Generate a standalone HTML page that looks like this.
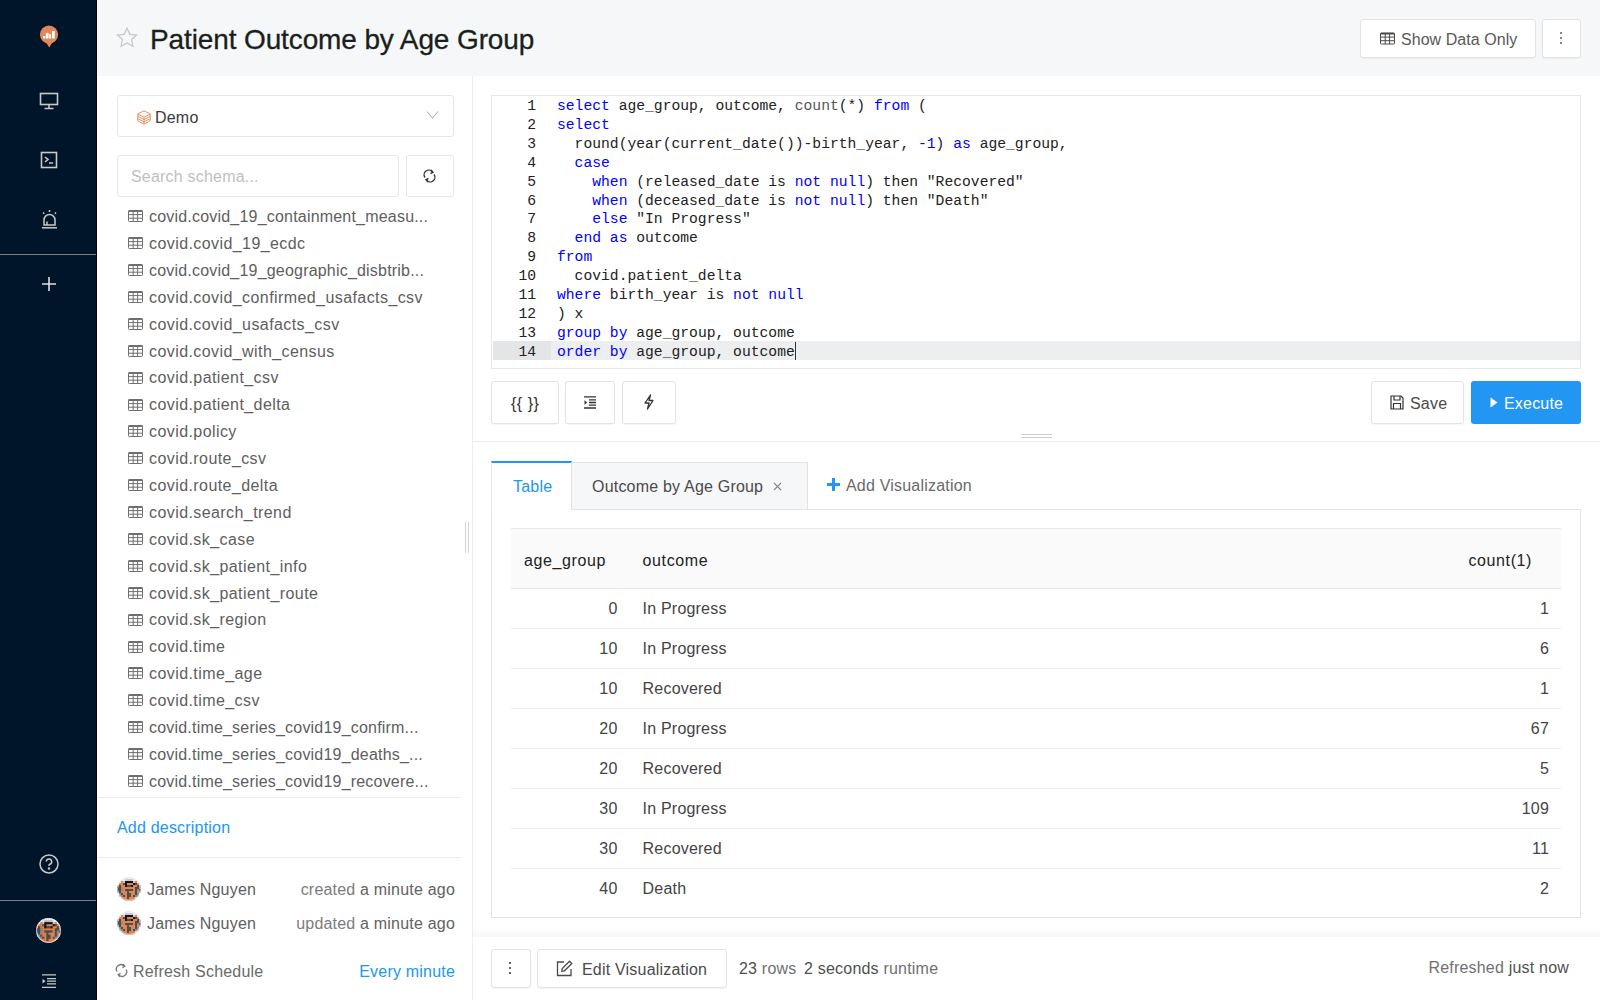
<!DOCTYPE html>
<html><head><meta charset="utf-8">
<style>
*{box-sizing:border-box;margin:0;padding:0}
html,body{width:1600px;height:1000px;overflow:hidden;background:#fff;font-family:"Liberation Sans",sans-serif;font-size:16px;color:#333;letter-spacing:0.2px}
.abs{position:absolute}
#nav{position:absolute;left:0;top:0;width:97px;height:1000px;background:#001529;border-right:1px solid #000}
#nav .sep{position:absolute;left:0;width:96px;height:1px;background:#7d7d7d}
#header{position:absolute;left:97px;top:0;width:1503px;height:76px;background:#f6f7f9}
#title{position:absolute;left:150px;top:22.7px;font-size:28px;color:#1b1f1c;letter-spacing:-0.12px;-webkit-text-stroke:0.3px #1b1f1c;white-space:nowrap;line-height:34px}
.btn{position:absolute;background:#fff;border:1px solid #e3e3e3;border-radius:3px;box-shadow:0 1px 1px rgba(0,0,0,0.04);color:#595959;white-space:nowrap}
#leftpane{position:absolute;left:97px;top:76px;width:376px;height:924px;background:#fff;border-right:1px solid #eceef0}
.sitem{position:absolute;left:149px;font-size:16px;color:#5e5e5e;white-space:nowrap;line-height:20px;letter-spacing:0.42px}
.sitem.tr{letter-spacing:0.2px}
.ticon{position:absolute;left:128px;width:15px;height:12px}
#editor{position:absolute;left:491px;top:95px;width:1090px;height:274px;border:1px solid #e8e8e8;background:#fff}
.ln{letter-spacing:0;position:absolute;left:0;width:45px;text-align:right;font-family:"Liberation Mono",monospace;font-size:14.68px;color:#222;line-height:18.9px}
.code{letter-spacing:0;position:absolute;left:65px;font-family:"Liberation Mono",monospace;font-size:14.68px;color:#222;line-height:18.9px;white-space:pre}
.k{color:#0000ff}
.th{position:absolute;font-size:16px;color:#222;letter-spacing:0.6px;line-height:20px;white-space:nowrap}
.td{position:absolute;font-size:16px;color:#444;line-height:20px;white-space:nowrap}
.avatar{width:24px;height:24px;border-radius:50%;background:radial-gradient(circle at 50% 50%,#7a5a48 0,#b8704a 35%,#d98a55 55%,#6d6d6d 80%,#e8e8e8 100%)}
.rowline{position:absolute;left:511px;width:1050px;height:1px;background:#efefef}
</style></head>
<body>
<!-- NAV -->
<div id="nav">
  <svg class="abs" style="left:38px;top:23px" width="22" height="26" viewBox="0 0 22 26">
    <circle cx="11" cy="11.6" r="9.1" fill="#e2875a"/>
    <path d="M7.5 18.5 L15.5 17.5 L11.2 24.4 Z" fill="#e2875a"/>
    <rect x="5" y="13" width="2.2" height="2.5" fill="#fff"/>
    <rect x="7.8" y="9.9" width="2.8" height="5.6" fill="#fff"/>
    <rect x="11.2" y="11" width="1.9" height="4.5" fill="#fff"/>
    <rect x="14" y="8" width="2.8" height="7.5" fill="#fff"/>
  </svg>
  <!-- monitor -->
  <svg class="abs" style="left:39px;top:92px" width="20" height="18" viewBox="0 0 20 18" fill="none" stroke="#c9c9c9" stroke-width="1.6">
    <rect x="1.5" y="1.5" width="17" height="11"/>
    <path d="M10 12.5 V16 M5.5 16.5 H14.5"/>
  </svg>
  <!-- terminal -->
  <svg class="abs" style="left:40px;top:151px" width="18" height="18" viewBox="0 0 18 18" fill="none" stroke="#c9c9c9" stroke-width="1.6">
    <rect x="1.5" y="1.5" width="15" height="15"/>
    <path d="M5 6 L8 8.5 L5 11 M9 12 H13"/>
  </svg>
  <!-- alert -->
  <svg class="abs" style="left:40px;top:209px" width="19" height="20" viewBox="0 0 19 20" fill="none" stroke="#c9c9c9" stroke-width="1.5">
    <path d="M4 16 V11 A5.5 5.5 0 0 1 15 11 V16 Z"/>
    <path d="M2 18.8 H17"/>
    <path d="M9.5 1 V3 M3 3.5 L4.2 4.8 M16 3.5 L14.8 4.8"/>
    <path d="M7 16 V12.5"/>
  </svg>
  <div class="sep" style="top:254px"></div>
  <!-- plus -->
  <svg class="abs" style="left:41px;top:276px" width="16" height="16" viewBox="0 0 16 16" stroke="#e0e0e0" stroke-width="1.6">
    <path d="M8 1 V15 M1 8 H15"/>
  </svg>
  <!-- help -->
  <svg class="abs" style="left:38px;top:853px" width="22" height="22" viewBox="0 0 22 22" fill="none" stroke="#c9c9c9" stroke-width="1.5">
    <circle cx="11" cy="11" r="9"/>
    <path d="M8.3 8.6 A2.7 2.7 0 1 1 11.8 11.2 C11 11.5 11 12 11 13"/>
    <circle cx="11" cy="15.6" r="0.5" fill="#c9c9c9"/>
  </svg>
  <div class="sep" style="top:900px"></div>
  <!-- avatar -->
  <svg class="abs" style="left:36px;top:918px" width="25" height="25" viewBox="0 0 24 24"><defs><clipPath id="av3"><circle cx="12" cy="12" r="12"/></clipPath></defs><g clip-path="url(#av3)"><rect x="0" y="0" width="2.3" height="2.3" fill="#eef0f2"/><rect x="2" y="0" width="2.3" height="2.3" fill="#eef0f2"/><rect x="4" y="0" width="2.3" height="2.3" fill="#eef0f2"/><rect x="6" y="0" width="2.3" height="2.3" fill="#eef0f2"/><rect x="8" y="0" width="2.3" height="2.3" fill="#eef0f2"/><rect x="10" y="0" width="2.3" height="2.3" fill="#eef0f2"/><rect x="12" y="0" width="2.3" height="2.3" fill="#eef0f2"/><rect x="14" y="0" width="2.3" height="2.3" fill="#eef0f2"/><rect x="16" y="0" width="2.3" height="2.3" fill="#eef0f2"/><rect x="18" y="0" width="2.3" height="2.3" fill="#eef0f2"/><rect x="20" y="0" width="2.3" height="2.3" fill="#eef0f2"/><rect x="22" y="0" width="2.3" height="2.3" fill="#eef0f2"/><rect x="0" y="2" width="2.3" height="2.3" fill="#eef0f2"/><rect x="2" y="2" width="2.3" height="2.3" fill="#eef0f2"/><rect x="4" y="2" width="2.3" height="2.3" fill="#eef0f2"/><rect x="6" y="2" width="2.3" height="2.3" fill="#eef0f2"/><rect x="8" y="2" width="2.3" height="2.3" fill="#c8ccd0"/><rect x="10" y="2" width="2.3" height="2.3" fill="#c8ccd0"/><rect x="12" y="2" width="2.3" height="2.3" fill="#c8ccd0"/><rect x="14" y="2" width="2.3" height="2.3" fill="#c8ccd0"/><rect x="16" y="2" width="2.3" height="2.3" fill="#eef0f2"/><rect x="18" y="2" width="2.3" height="2.3" fill="#eef0f2"/><rect x="20" y="2" width="2.3" height="2.3" fill="#eef0f2"/><rect x="22" y="2" width="2.3" height="2.3" fill="#eef0f2"/><rect x="0" y="4" width="2.3" height="2.3" fill="#eef0f2"/><rect x="2" y="4" width="2.3" height="2.3" fill="#eef0f2"/><rect x="4" y="4" width="2.3" height="2.3" fill="#e3844f"/><rect x="6" y="4" width="2.3" height="2.3" fill="#c8ccd0"/><rect x="8" y="4" width="2.3" height="2.3" fill="#161616"/><rect x="10" y="4" width="2.3" height="2.3" fill="#161616"/><rect x="12" y="4" width="2.3" height="2.3" fill="#161616"/><rect x="14" y="4" width="2.3" height="2.3" fill="#161616"/><rect x="16" y="4" width="2.3" height="2.3" fill="#c8ccd0"/><rect x="18" y="4" width="2.3" height="2.3" fill="#e3844f"/><rect x="20" y="4" width="2.3" height="2.3" fill="#eef0f2"/><rect x="22" y="4" width="2.3" height="2.3" fill="#eef0f2"/><rect x="0" y="6" width="2.3" height="2.3" fill="#eef0f2"/><rect x="2" y="6" width="2.3" height="2.3" fill="#e3844f"/><rect x="4" y="6" width="2.3" height="2.3" fill="#e3844f"/><rect x="6" y="6" width="2.3" height="2.3" fill="#4b4f52"/><rect x="8" y="6" width="2.3" height="2.3" fill="#161616"/><rect x="10" y="6" width="2.3" height="2.3" fill="#e3844f"/><rect x="12" y="6" width="2.3" height="2.3" fill="#e3844f"/><rect x="14" y="6" width="2.3" height="2.3" fill="#e3844f"/><rect x="16" y="6" width="2.3" height="2.3" fill="#161616"/><rect x="18" y="6" width="2.3" height="2.3" fill="#4b4f52"/><rect x="20" y="6" width="2.3" height="2.3" fill="#e3844f"/><rect x="22" y="6" width="2.3" height="2.3" fill="#eef0f2"/><rect x="0" y="8" width="2.3" height="2.3" fill="#e3844f"/><rect x="2" y="8" width="2.3" height="2.3" fill="#4b4f52"/><rect x="4" y="8" width="2.3" height="2.3" fill="#e3844f"/><rect x="6" y="8" width="2.3" height="2.3" fill="#e3844f"/><rect x="8" y="8" width="2.3" height="2.3" fill="#161616"/><rect x="10" y="8" width="2.3" height="2.3" fill="#4b4f52"/><rect x="12" y="8" width="2.3" height="2.3" fill="#4b4f52"/><rect x="14" y="8" width="2.3" height="2.3" fill="#161616"/><rect x="16" y="8" width="2.3" height="2.3" fill="#e3844f"/><rect x="18" y="8" width="2.3" height="2.3" fill="#e3844f"/><rect x="20" y="8" width="2.3" height="2.3" fill="#4b4f52"/><rect x="22" y="8" width="2.3" height="2.3" fill="#e3844f"/><rect x="0" y="10" width="2.3" height="2.3" fill="#4b4f52"/><rect x="2" y="10" width="2.3" height="2.3" fill="#4b4f52"/><rect x="4" y="10" width="2.3" height="2.3" fill="#8b8f92"/><rect x="6" y="10" width="2.3" height="2.3" fill="#e3844f"/><rect x="8" y="10" width="2.3" height="2.3" fill="#e3844f"/><rect x="10" y="10" width="2.3" height="2.3" fill="#e3844f"/><rect x="12" y="10" width="2.3" height="2.3" fill="#e3844f"/><rect x="14" y="10" width="2.3" height="2.3" fill="#e3844f"/><rect x="16" y="10" width="2.3" height="2.3" fill="#e3844f"/><rect x="18" y="10" width="2.3" height="2.3" fill="#4b4f52"/><rect x="20" y="10" width="2.3" height="2.3" fill="#4b4f52"/><rect x="22" y="10" width="2.3" height="2.3" fill="#e3844f"/><rect x="0" y="12" width="2.3" height="2.3" fill="#4b4f52"/><rect x="2" y="12" width="2.3" height="2.3" fill="#4b4f52"/><rect x="4" y="12" width="2.3" height="2.3" fill="#8b8f92"/><rect x="6" y="12" width="2.3" height="2.3" fill="#e3844f"/><rect x="8" y="12" width="2.3" height="2.3" fill="#4b4f52"/><rect x="10" y="12" width="2.3" height="2.3" fill="#4b4f52"/><rect x="12" y="12" width="2.3" height="2.3" fill="#4b4f52"/><rect x="14" y="12" width="2.3" height="2.3" fill="#4b4f52"/><rect x="16" y="12" width="2.3" height="2.3" fill="#e3844f"/><rect x="18" y="12" width="2.3" height="2.3" fill="#4b4f52"/><rect x="20" y="12" width="2.3" height="2.3" fill="#8b8f92"/><rect x="22" y="12" width="2.3" height="2.3" fill="#4b4f52"/><rect x="0" y="14" width="2.3" height="2.3" fill="#8b8f92"/><rect x="2" y="14" width="2.3" height="2.3" fill="#4b4f52"/><rect x="4" y="14" width="2.3" height="2.3" fill="#e3844f"/><rect x="6" y="14" width="2.3" height="2.3" fill="#e3844f"/><rect x="8" y="14" width="2.3" height="2.3" fill="#e3844f"/><rect x="10" y="14" width="2.3" height="2.3" fill="#4b4f52"/><rect x="12" y="14" width="2.3" height="2.3" fill="#e3844f"/><rect x="14" y="14" width="2.3" height="2.3" fill="#e3844f"/><rect x="16" y="14" width="2.3" height="2.3" fill="#e3844f"/><rect x="18" y="14" width="2.3" height="2.3" fill="#4b4f52"/><rect x="20" y="14" width="2.3" height="2.3" fill="#e3844f"/><rect x="22" y="14" width="2.3" height="2.3" fill="#8b8f92"/><rect x="0" y="16" width="2.3" height="2.3" fill="#eef0f2"/><rect x="2" y="16" width="2.3" height="2.3" fill="#8b8f92"/><rect x="4" y="16" width="2.3" height="2.3" fill="#4b4f52"/><rect x="6" y="16" width="2.3" height="2.3" fill="#e3844f"/><rect x="8" y="16" width="2.3" height="2.3" fill="#e3844f"/><rect x="10" y="16" width="2.3" height="2.3" fill="#4b4f52"/><rect x="12" y="16" width="2.3" height="2.3" fill="#4b4f52"/><rect x="14" y="16" width="2.3" height="2.3" fill="#e3844f"/><rect x="16" y="16" width="2.3" height="2.3" fill="#e3844f"/><rect x="18" y="16" width="2.3" height="2.3" fill="#4b4f52"/><rect x="20" y="16" width="2.3" height="2.3" fill="#8b8f92"/><rect x="22" y="16" width="2.3" height="2.3" fill="#eef0f2"/><rect x="0" y="18" width="2.3" height="2.3" fill="#eef0f2"/><rect x="2" y="18" width="2.3" height="2.3" fill="#8b8f92"/><rect x="4" y="18" width="2.3" height="2.3" fill="#8b8f92"/><rect x="6" y="18" width="2.3" height="2.3" fill="#4b4f52"/><rect x="8" y="18" width="2.3" height="2.3" fill="#e3844f"/><rect x="10" y="18" width="2.3" height="2.3" fill="#4b4f52"/><rect x="12" y="18" width="2.3" height="2.3" fill="#4b4f52"/><rect x="14" y="18" width="2.3" height="2.3" fill="#e3844f"/><rect x="16" y="18" width="2.3" height="2.3" fill="#4b4f52"/><rect x="18" y="18" width="2.3" height="2.3" fill="#8b8f92"/><rect x="20" y="18" width="2.3" height="2.3" fill="#8b8f92"/><rect x="22" y="18" width="2.3" height="2.3" fill="#eef0f2"/><rect x="0" y="20" width="2.3" height="2.3" fill="#eef0f2"/><rect x="2" y="20" width="2.3" height="2.3" fill="#eef0f2"/><rect x="4" y="20" width="2.3" height="2.3" fill="#e3844f"/><rect x="6" y="20" width="2.3" height="2.3" fill="#e3844f"/><rect x="8" y="20" width="2.3" height="2.3" fill="#e3844f"/><rect x="10" y="20" width="2.3" height="2.3" fill="#4b4f52"/><rect x="12" y="20" width="2.3" height="2.3" fill="#e3844f"/><rect x="14" y="20" width="2.3" height="2.3" fill="#e3844f"/><rect x="16" y="20" width="2.3" height="2.3" fill="#e3844f"/><rect x="18" y="20" width="2.3" height="2.3" fill="#c8ccd0"/><rect x="20" y="20" width="2.3" height="2.3" fill="#eef0f2"/><rect x="22" y="20" width="2.3" height="2.3" fill="#eef0f2"/><rect x="0" y="22" width="2.3" height="2.3" fill="#eef0f2"/><rect x="2" y="22" width="2.3" height="2.3" fill="#eef0f2"/><rect x="4" y="22" width="2.3" height="2.3" fill="#eef0f2"/><rect x="6" y="22" width="2.3" height="2.3" fill="#e3844f"/><rect x="8" y="22" width="2.3" height="2.3" fill="#e3844f"/><rect x="10" y="22" width="2.3" height="2.3" fill="#e3844f"/><rect x="12" y="22" width="2.3" height="2.3" fill="#e3844f"/><rect x="14" y="22" width="2.3" height="2.3" fill="#e3844f"/><rect x="16" y="22" width="2.3" height="2.3" fill="#e3844f"/><rect x="18" y="22" width="2.3" height="2.3" fill="#eef0f2"/><rect x="20" y="22" width="2.3" height="2.3" fill="#eef0f2"/><rect x="22" y="22" width="2.3" height="2.3" fill="#eef0f2"/></g><circle cx="12" cy="12" r="11.5" fill="none" stroke="#e6e6e6" stroke-opacity="0.7" stroke-width="1"/></svg>
  <!-- menu -->
  <svg class="abs" style="left:42px;top:973.5px" width="14" height="14" viewBox="0 0 14 14" fill="none" stroke="#c9c9c9" stroke-width="1.3">
    <path d="M0 0.8 H14 M5 4.6 H14 M5 7.2 H14 M5 9.8 H14 M0 13.3 H14"/>
    <path d="M0.5 4.8 L3.5 7.2 L0.5 9.6 Z" fill="#c9c9c9" stroke="none"/>
  </svg>
</div>

<!-- HEADER -->
<div id="header"></div>
<svg class="abs" style="left:116px;top:27px" width="22" height="21" viewBox="0 0 22 21" fill="none" stroke="#c8c8c8" stroke-width="1.3">
  <path d="M11 1.2 L13.9 7.3 L20.5 8 L15.6 12.5 L16.9 19.2 L11 15.9 L5.1 19.2 L6.4 12.5 L1.5 8 L8.1 7.3 Z"/>
</svg>
<div id="title">Patient Outcome by Age Group</div>
<div class="btn" style="left:1360px;top:19px;width:176px;height:39px"></div>
<svg class="abs" style="left:1380px;top:32px" width="15" height="13" viewBox="0 0 15 12" fill="none" stroke="#4a4a4a" stroke-width="1"><rect x="0.5" y="0.5" width="14" height="11" rx="0.8"/><path d="M0.5 1.2H14.5" stroke-width="1.6"/><path d="M0.5 4.6H14.5M0.5 8.2H14.5M5.2 0.5V11.5M9.6 0.5V11.5"/></svg>
<div class="abs" style="left:1401px;top:30px;font-size:16px;color:#595959;white-space:nowrap;line-height:20px;letter-spacing:0.05px">Show Data Only</div>
<div class="btn" style="left:1542px;top:19px;width:39px;height:39px"></div>
<svg class="abs" style="left:1559px;top:31px" width="4" height="14" viewBox="0 0 4 14" fill="#555"><circle cx="2" cy="2" r="0.95"/><circle cx="2" cy="7" r="0.95"/><circle cx="2" cy="12" r="0.95"/></svg>

<!-- LEFT PANE -->
<div id="leftpane"></div>
<!-- Demo select -->
<div class="btn" style="left:117px;top:95px;width:337px;height:42px;border-color:#e6e6e6;box-shadow:none"></div>
<svg class="abs" style="left:136.5px;top:109.5px" width="14" height="15" viewBox="0 0 14 15" fill="none" stroke="#e0804e" stroke-width="1" stroke-opacity="0.85">
  <path d="M7 0.8 L13.2 4 L13.2 10.8 L7 14.2 L0.8 10.8 L0.8 4 Z"/>
  <path d="M0.8 4 L7 7.3 L13.2 4 M7 7.3 V14.2"/>
  <path d="M0.8 6.3 L7 9.6 L13.2 6.3 M0.8 8.6 L7 11.9 L13.2 8.6"/>
</svg>
<div class="abs" style="left:155px;top:108.0px;font-size:16px;color:#3a3a3a;line-height:20px">Demo</div>
<svg class="abs" style="left:426px;top:110px" width="13" height="10" viewBox="0 0 13 10" fill="none" stroke="#b5b5b5" stroke-width="1.1"><path d="M1 1.5 L6.5 8 L12 1.5"/></svg>
<!-- search -->
<div class="btn" style="left:117px;top:155px;width:282px;height:42px;border-color:#e6e6e6;box-shadow:none"></div>
<div class="abs" style="left:131px;top:167.0px;font-size:16px;color:#bfbfbf;line-height:20px">Search schema...</div>
<div class="btn" style="left:406px;top:155px;width:48px;height:42px;border-color:#e6e6e6;box-shadow:none"></div>
<svg class="abs" style="left:422px;top:168px" width="15" height="16" viewBox="0 0 15 16" fill="none" stroke="#333" stroke-width="1.4">
  <path d="M3 9.5 A4.6 4.6 0 0 1 10.5 4"/>
  <path d="M12 6.5 A4.6 4.6 0 0 1 4.5 12"/>
  <path d="M9 2 L11 4.2 L8.5 5.6" />
  <path d="M6 14 L4 11.8 L6.5 10.4"/>
</svg>
<svg class="ticon" style="top:210.30px" viewBox="0 0 15 12" fill="none" stroke="#6f6f6f" stroke-width="1"><rect x="0.5" y="0.5" width="14" height="11" rx="0.8"/><path d="M0.5 1.2H14.5" stroke-width="1.6"/><path d="M0.5 4.6H14.5M0.5 8.2H14.5M5.2 0.5V11.5M9.6 0.5V11.5"/></svg>
<div class="sitem tr" style="top:207.06px">covid.covid_19_containment_measu...</div>
<svg class="ticon" style="top:237.19px" viewBox="0 0 15 12" fill="none" stroke="#6f6f6f" stroke-width="1"><rect x="0.5" y="0.5" width="14" height="11" rx="0.8"/><path d="M0.5 1.2H14.5" stroke-width="1.6"/><path d="M0.5 4.6H14.5M0.5 8.2H14.5M5.2 0.5V11.5M9.6 0.5V11.5"/></svg>
<div class="sitem" style="top:233.95px">covid.covid_19_ecdc</div>
<svg class="ticon" style="top:264.08px" viewBox="0 0 15 12" fill="none" stroke="#6f6f6f" stroke-width="1"><rect x="0.5" y="0.5" width="14" height="11" rx="0.8"/><path d="M0.5 1.2H14.5" stroke-width="1.6"/><path d="M0.5 4.6H14.5M0.5 8.2H14.5M5.2 0.5V11.5M9.6 0.5V11.5"/></svg>
<div class="sitem tr" style="top:260.84px">covid.covid_19_geographic_disbtrib...</div>
<svg class="ticon" style="top:290.97px" viewBox="0 0 15 12" fill="none" stroke="#6f6f6f" stroke-width="1"><rect x="0.5" y="0.5" width="14" height="11" rx="0.8"/><path d="M0.5 1.2H14.5" stroke-width="1.6"/><path d="M0.5 4.6H14.5M0.5 8.2H14.5M5.2 0.5V11.5M9.6 0.5V11.5"/></svg>
<div class="sitem" style="top:287.73px">covid.covid_confirmed_usafacts_csv</div>
<svg class="ticon" style="top:317.86px" viewBox="0 0 15 12" fill="none" stroke="#6f6f6f" stroke-width="1"><rect x="0.5" y="0.5" width="14" height="11" rx="0.8"/><path d="M0.5 1.2H14.5" stroke-width="1.6"/><path d="M0.5 4.6H14.5M0.5 8.2H14.5M5.2 0.5V11.5M9.6 0.5V11.5"/></svg>
<div class="sitem" style="top:314.62px">covid.covid_usafacts_csv</div>
<svg class="ticon" style="top:344.75px" viewBox="0 0 15 12" fill="none" stroke="#6f6f6f" stroke-width="1"><rect x="0.5" y="0.5" width="14" height="11" rx="0.8"/><path d="M0.5 1.2H14.5" stroke-width="1.6"/><path d="M0.5 4.6H14.5M0.5 8.2H14.5M5.2 0.5V11.5M9.6 0.5V11.5"/></svg>
<div class="sitem" style="top:341.51px">covid.covid_with_census</div>
<svg class="ticon" style="top:371.64px" viewBox="0 0 15 12" fill="none" stroke="#6f6f6f" stroke-width="1"><rect x="0.5" y="0.5" width="14" height="11" rx="0.8"/><path d="M0.5 1.2H14.5" stroke-width="1.6"/><path d="M0.5 4.6H14.5M0.5 8.2H14.5M5.2 0.5V11.5M9.6 0.5V11.5"/></svg>
<div class="sitem" style="top:368.40px">covid.patient_csv</div>
<svg class="ticon" style="top:398.53px" viewBox="0 0 15 12" fill="none" stroke="#6f6f6f" stroke-width="1"><rect x="0.5" y="0.5" width="14" height="11" rx="0.8"/><path d="M0.5 1.2H14.5" stroke-width="1.6"/><path d="M0.5 4.6H14.5M0.5 8.2H14.5M5.2 0.5V11.5M9.6 0.5V11.5"/></svg>
<div class="sitem" style="top:395.29px">covid.patient_delta</div>
<svg class="ticon" style="top:425.42px" viewBox="0 0 15 12" fill="none" stroke="#6f6f6f" stroke-width="1"><rect x="0.5" y="0.5" width="14" height="11" rx="0.8"/><path d="M0.5 1.2H14.5" stroke-width="1.6"/><path d="M0.5 4.6H14.5M0.5 8.2H14.5M5.2 0.5V11.5M9.6 0.5V11.5"/></svg>
<div class="sitem" style="top:422.18px">covid.policy</div>
<svg class="ticon" style="top:452.31px" viewBox="0 0 15 12" fill="none" stroke="#6f6f6f" stroke-width="1"><rect x="0.5" y="0.5" width="14" height="11" rx="0.8"/><path d="M0.5 1.2H14.5" stroke-width="1.6"/><path d="M0.5 4.6H14.5M0.5 8.2H14.5M5.2 0.5V11.5M9.6 0.5V11.5"/></svg>
<div class="sitem" style="top:449.07px">covid.route_csv</div>
<svg class="ticon" style="top:479.20px" viewBox="0 0 15 12" fill="none" stroke="#6f6f6f" stroke-width="1"><rect x="0.5" y="0.5" width="14" height="11" rx="0.8"/><path d="M0.5 1.2H14.5" stroke-width="1.6"/><path d="M0.5 4.6H14.5M0.5 8.2H14.5M5.2 0.5V11.5M9.6 0.5V11.5"/></svg>
<div class="sitem" style="top:475.96px">covid.route_delta</div>
<svg class="ticon" style="top:506.09px" viewBox="0 0 15 12" fill="none" stroke="#6f6f6f" stroke-width="1"><rect x="0.5" y="0.5" width="14" height="11" rx="0.8"/><path d="M0.5 1.2H14.5" stroke-width="1.6"/><path d="M0.5 4.6H14.5M0.5 8.2H14.5M5.2 0.5V11.5M9.6 0.5V11.5"/></svg>
<div class="sitem" style="top:502.85px">covid.search_trend</div>
<svg class="ticon" style="top:532.98px" viewBox="0 0 15 12" fill="none" stroke="#6f6f6f" stroke-width="1"><rect x="0.5" y="0.5" width="14" height="11" rx="0.8"/><path d="M0.5 1.2H14.5" stroke-width="1.6"/><path d="M0.5 4.6H14.5M0.5 8.2H14.5M5.2 0.5V11.5M9.6 0.5V11.5"/></svg>
<div class="sitem" style="top:529.74px">covid.sk_case</div>
<svg class="ticon" style="top:559.87px" viewBox="0 0 15 12" fill="none" stroke="#6f6f6f" stroke-width="1"><rect x="0.5" y="0.5" width="14" height="11" rx="0.8"/><path d="M0.5 1.2H14.5" stroke-width="1.6"/><path d="M0.5 4.6H14.5M0.5 8.2H14.5M5.2 0.5V11.5M9.6 0.5V11.5"/></svg>
<div class="sitem" style="top:556.63px">covid.sk_patient_info</div>
<svg class="ticon" style="top:586.76px" viewBox="0 0 15 12" fill="none" stroke="#6f6f6f" stroke-width="1"><rect x="0.5" y="0.5" width="14" height="11" rx="0.8"/><path d="M0.5 1.2H14.5" stroke-width="1.6"/><path d="M0.5 4.6H14.5M0.5 8.2H14.5M5.2 0.5V11.5M9.6 0.5V11.5"/></svg>
<div class="sitem" style="top:583.52px">covid.sk_patient_route</div>
<svg class="ticon" style="top:613.65px" viewBox="0 0 15 12" fill="none" stroke="#6f6f6f" stroke-width="1"><rect x="0.5" y="0.5" width="14" height="11" rx="0.8"/><path d="M0.5 1.2H14.5" stroke-width="1.6"/><path d="M0.5 4.6H14.5M0.5 8.2H14.5M5.2 0.5V11.5M9.6 0.5V11.5"/></svg>
<div class="sitem" style="top:610.41px">covid.sk_region</div>
<svg class="ticon" style="top:640.54px" viewBox="0 0 15 12" fill="none" stroke="#6f6f6f" stroke-width="1"><rect x="0.5" y="0.5" width="14" height="11" rx="0.8"/><path d="M0.5 1.2H14.5" stroke-width="1.6"/><path d="M0.5 4.6H14.5M0.5 8.2H14.5M5.2 0.5V11.5M9.6 0.5V11.5"/></svg>
<div class="sitem" style="top:637.30px">covid.time</div>
<svg class="ticon" style="top:667.43px" viewBox="0 0 15 12" fill="none" stroke="#6f6f6f" stroke-width="1"><rect x="0.5" y="0.5" width="14" height="11" rx="0.8"/><path d="M0.5 1.2H14.5" stroke-width="1.6"/><path d="M0.5 4.6H14.5M0.5 8.2H14.5M5.2 0.5V11.5M9.6 0.5V11.5"/></svg>
<div class="sitem" style="top:664.19px">covid.time_age</div>
<svg class="ticon" style="top:694.32px" viewBox="0 0 15 12" fill="none" stroke="#6f6f6f" stroke-width="1"><rect x="0.5" y="0.5" width="14" height="11" rx="0.8"/><path d="M0.5 1.2H14.5" stroke-width="1.6"/><path d="M0.5 4.6H14.5M0.5 8.2H14.5M5.2 0.5V11.5M9.6 0.5V11.5"/></svg>
<div class="sitem" style="top:691.08px">covid.time_csv</div>
<svg class="ticon" style="top:721.21px" viewBox="0 0 15 12" fill="none" stroke="#6f6f6f" stroke-width="1"><rect x="0.5" y="0.5" width="14" height="11" rx="0.8"/><path d="M0.5 1.2H14.5" stroke-width="1.6"/><path d="M0.5 4.6H14.5M0.5 8.2H14.5M5.2 0.5V11.5M9.6 0.5V11.5"/></svg>
<div class="sitem tr" style="top:717.97px">covid.time_series_covid19_confirm...</div>
<svg class="ticon" style="top:748.10px" viewBox="0 0 15 12" fill="none" stroke="#6f6f6f" stroke-width="1"><rect x="0.5" y="0.5" width="14" height="11" rx="0.8"/><path d="M0.5 1.2H14.5" stroke-width="1.6"/><path d="M0.5 4.6H14.5M0.5 8.2H14.5M5.2 0.5V11.5M9.6 0.5V11.5"/></svg>
<div class="sitem tr" style="top:744.86px">covid.time_series_covid19_deaths_...</div>
<svg class="ticon" style="top:774.99px" viewBox="0 0 15 12" fill="none" stroke="#6f6f6f" stroke-width="1"><rect x="0.5" y="0.5" width="14" height="11" rx="0.8"/><path d="M0.5 1.2H14.5" stroke-width="1.6"/><path d="M0.5 4.6H14.5M0.5 8.2H14.5M5.2 0.5V11.5M9.6 0.5V11.5"/></svg>
<div class="sitem tr" style="top:771.75px">covid.time_series_covid19_recovere...</div>
<div class="abs" style="left:97px;top:797px;width:364px;height:1px;background:#ececec"></div>
<div class="abs" style="left:117px;top:818.0px;font-size:16px;color:#2196f3;line-height:20px">Add description</div>
<div class="abs" style="left:97px;top:857px;width:364px;height:1px;background:#ececec"></div>
<svg class="abs" style="left:117px;top:877px" width="24" height="24" viewBox="0 0 24 24"><defs><clipPath id="av1"><circle cx="12" cy="12" r="12"/></clipPath></defs><g clip-path="url(#av1)"><rect x="0" y="0" width="2.3" height="2.3" fill="#eef0f2"/><rect x="2" y="0" width="2.3" height="2.3" fill="#eef0f2"/><rect x="4" y="0" width="2.3" height="2.3" fill="#eef0f2"/><rect x="6" y="0" width="2.3" height="2.3" fill="#eef0f2"/><rect x="8" y="0" width="2.3" height="2.3" fill="#eef0f2"/><rect x="10" y="0" width="2.3" height="2.3" fill="#eef0f2"/><rect x="12" y="0" width="2.3" height="2.3" fill="#eef0f2"/><rect x="14" y="0" width="2.3" height="2.3" fill="#eef0f2"/><rect x="16" y="0" width="2.3" height="2.3" fill="#eef0f2"/><rect x="18" y="0" width="2.3" height="2.3" fill="#eef0f2"/><rect x="20" y="0" width="2.3" height="2.3" fill="#eef0f2"/><rect x="22" y="0" width="2.3" height="2.3" fill="#eef0f2"/><rect x="0" y="2" width="2.3" height="2.3" fill="#eef0f2"/><rect x="2" y="2" width="2.3" height="2.3" fill="#eef0f2"/><rect x="4" y="2" width="2.3" height="2.3" fill="#eef0f2"/><rect x="6" y="2" width="2.3" height="2.3" fill="#eef0f2"/><rect x="8" y="2" width="2.3" height="2.3" fill="#c8ccd0"/><rect x="10" y="2" width="2.3" height="2.3" fill="#c8ccd0"/><rect x="12" y="2" width="2.3" height="2.3" fill="#c8ccd0"/><rect x="14" y="2" width="2.3" height="2.3" fill="#c8ccd0"/><rect x="16" y="2" width="2.3" height="2.3" fill="#eef0f2"/><rect x="18" y="2" width="2.3" height="2.3" fill="#eef0f2"/><rect x="20" y="2" width="2.3" height="2.3" fill="#eef0f2"/><rect x="22" y="2" width="2.3" height="2.3" fill="#eef0f2"/><rect x="0" y="4" width="2.3" height="2.3" fill="#eef0f2"/><rect x="2" y="4" width="2.3" height="2.3" fill="#eef0f2"/><rect x="4" y="4" width="2.3" height="2.3" fill="#e3844f"/><rect x="6" y="4" width="2.3" height="2.3" fill="#c8ccd0"/><rect x="8" y="4" width="2.3" height="2.3" fill="#161616"/><rect x="10" y="4" width="2.3" height="2.3" fill="#161616"/><rect x="12" y="4" width="2.3" height="2.3" fill="#161616"/><rect x="14" y="4" width="2.3" height="2.3" fill="#161616"/><rect x="16" y="4" width="2.3" height="2.3" fill="#c8ccd0"/><rect x="18" y="4" width="2.3" height="2.3" fill="#e3844f"/><rect x="20" y="4" width="2.3" height="2.3" fill="#eef0f2"/><rect x="22" y="4" width="2.3" height="2.3" fill="#eef0f2"/><rect x="0" y="6" width="2.3" height="2.3" fill="#eef0f2"/><rect x="2" y="6" width="2.3" height="2.3" fill="#e3844f"/><rect x="4" y="6" width="2.3" height="2.3" fill="#e3844f"/><rect x="6" y="6" width="2.3" height="2.3" fill="#4b4f52"/><rect x="8" y="6" width="2.3" height="2.3" fill="#161616"/><rect x="10" y="6" width="2.3" height="2.3" fill="#e3844f"/><rect x="12" y="6" width="2.3" height="2.3" fill="#e3844f"/><rect x="14" y="6" width="2.3" height="2.3" fill="#e3844f"/><rect x="16" y="6" width="2.3" height="2.3" fill="#161616"/><rect x="18" y="6" width="2.3" height="2.3" fill="#4b4f52"/><rect x="20" y="6" width="2.3" height="2.3" fill="#e3844f"/><rect x="22" y="6" width="2.3" height="2.3" fill="#eef0f2"/><rect x="0" y="8" width="2.3" height="2.3" fill="#e3844f"/><rect x="2" y="8" width="2.3" height="2.3" fill="#4b4f52"/><rect x="4" y="8" width="2.3" height="2.3" fill="#e3844f"/><rect x="6" y="8" width="2.3" height="2.3" fill="#e3844f"/><rect x="8" y="8" width="2.3" height="2.3" fill="#161616"/><rect x="10" y="8" width="2.3" height="2.3" fill="#4b4f52"/><rect x="12" y="8" width="2.3" height="2.3" fill="#4b4f52"/><rect x="14" y="8" width="2.3" height="2.3" fill="#161616"/><rect x="16" y="8" width="2.3" height="2.3" fill="#e3844f"/><rect x="18" y="8" width="2.3" height="2.3" fill="#e3844f"/><rect x="20" y="8" width="2.3" height="2.3" fill="#4b4f52"/><rect x="22" y="8" width="2.3" height="2.3" fill="#e3844f"/><rect x="0" y="10" width="2.3" height="2.3" fill="#4b4f52"/><rect x="2" y="10" width="2.3" height="2.3" fill="#4b4f52"/><rect x="4" y="10" width="2.3" height="2.3" fill="#8b8f92"/><rect x="6" y="10" width="2.3" height="2.3" fill="#e3844f"/><rect x="8" y="10" width="2.3" height="2.3" fill="#e3844f"/><rect x="10" y="10" width="2.3" height="2.3" fill="#e3844f"/><rect x="12" y="10" width="2.3" height="2.3" fill="#e3844f"/><rect x="14" y="10" width="2.3" height="2.3" fill="#e3844f"/><rect x="16" y="10" width="2.3" height="2.3" fill="#e3844f"/><rect x="18" y="10" width="2.3" height="2.3" fill="#4b4f52"/><rect x="20" y="10" width="2.3" height="2.3" fill="#4b4f52"/><rect x="22" y="10" width="2.3" height="2.3" fill="#e3844f"/><rect x="0" y="12" width="2.3" height="2.3" fill="#4b4f52"/><rect x="2" y="12" width="2.3" height="2.3" fill="#4b4f52"/><rect x="4" y="12" width="2.3" height="2.3" fill="#8b8f92"/><rect x="6" y="12" width="2.3" height="2.3" fill="#e3844f"/><rect x="8" y="12" width="2.3" height="2.3" fill="#4b4f52"/><rect x="10" y="12" width="2.3" height="2.3" fill="#4b4f52"/><rect x="12" y="12" width="2.3" height="2.3" fill="#4b4f52"/><rect x="14" y="12" width="2.3" height="2.3" fill="#4b4f52"/><rect x="16" y="12" width="2.3" height="2.3" fill="#e3844f"/><rect x="18" y="12" width="2.3" height="2.3" fill="#4b4f52"/><rect x="20" y="12" width="2.3" height="2.3" fill="#8b8f92"/><rect x="22" y="12" width="2.3" height="2.3" fill="#4b4f52"/><rect x="0" y="14" width="2.3" height="2.3" fill="#8b8f92"/><rect x="2" y="14" width="2.3" height="2.3" fill="#4b4f52"/><rect x="4" y="14" width="2.3" height="2.3" fill="#e3844f"/><rect x="6" y="14" width="2.3" height="2.3" fill="#e3844f"/><rect x="8" y="14" width="2.3" height="2.3" fill="#e3844f"/><rect x="10" y="14" width="2.3" height="2.3" fill="#4b4f52"/><rect x="12" y="14" width="2.3" height="2.3" fill="#e3844f"/><rect x="14" y="14" width="2.3" height="2.3" fill="#e3844f"/><rect x="16" y="14" width="2.3" height="2.3" fill="#e3844f"/><rect x="18" y="14" width="2.3" height="2.3" fill="#4b4f52"/><rect x="20" y="14" width="2.3" height="2.3" fill="#e3844f"/><rect x="22" y="14" width="2.3" height="2.3" fill="#8b8f92"/><rect x="0" y="16" width="2.3" height="2.3" fill="#eef0f2"/><rect x="2" y="16" width="2.3" height="2.3" fill="#8b8f92"/><rect x="4" y="16" width="2.3" height="2.3" fill="#4b4f52"/><rect x="6" y="16" width="2.3" height="2.3" fill="#e3844f"/><rect x="8" y="16" width="2.3" height="2.3" fill="#e3844f"/><rect x="10" y="16" width="2.3" height="2.3" fill="#4b4f52"/><rect x="12" y="16" width="2.3" height="2.3" fill="#4b4f52"/><rect x="14" y="16" width="2.3" height="2.3" fill="#e3844f"/><rect x="16" y="16" width="2.3" height="2.3" fill="#e3844f"/><rect x="18" y="16" width="2.3" height="2.3" fill="#4b4f52"/><rect x="20" y="16" width="2.3" height="2.3" fill="#8b8f92"/><rect x="22" y="16" width="2.3" height="2.3" fill="#eef0f2"/><rect x="0" y="18" width="2.3" height="2.3" fill="#eef0f2"/><rect x="2" y="18" width="2.3" height="2.3" fill="#8b8f92"/><rect x="4" y="18" width="2.3" height="2.3" fill="#8b8f92"/><rect x="6" y="18" width="2.3" height="2.3" fill="#4b4f52"/><rect x="8" y="18" width="2.3" height="2.3" fill="#e3844f"/><rect x="10" y="18" width="2.3" height="2.3" fill="#4b4f52"/><rect x="12" y="18" width="2.3" height="2.3" fill="#4b4f52"/><rect x="14" y="18" width="2.3" height="2.3" fill="#e3844f"/><rect x="16" y="18" width="2.3" height="2.3" fill="#4b4f52"/><rect x="18" y="18" width="2.3" height="2.3" fill="#8b8f92"/><rect x="20" y="18" width="2.3" height="2.3" fill="#8b8f92"/><rect x="22" y="18" width="2.3" height="2.3" fill="#eef0f2"/><rect x="0" y="20" width="2.3" height="2.3" fill="#eef0f2"/><rect x="2" y="20" width="2.3" height="2.3" fill="#eef0f2"/><rect x="4" y="20" width="2.3" height="2.3" fill="#e3844f"/><rect x="6" y="20" width="2.3" height="2.3" fill="#e3844f"/><rect x="8" y="20" width="2.3" height="2.3" fill="#e3844f"/><rect x="10" y="20" width="2.3" height="2.3" fill="#4b4f52"/><rect x="12" y="20" width="2.3" height="2.3" fill="#e3844f"/><rect x="14" y="20" width="2.3" height="2.3" fill="#e3844f"/><rect x="16" y="20" width="2.3" height="2.3" fill="#e3844f"/><rect x="18" y="20" width="2.3" height="2.3" fill="#c8ccd0"/><rect x="20" y="20" width="2.3" height="2.3" fill="#eef0f2"/><rect x="22" y="20" width="2.3" height="2.3" fill="#eef0f2"/><rect x="0" y="22" width="2.3" height="2.3" fill="#eef0f2"/><rect x="2" y="22" width="2.3" height="2.3" fill="#eef0f2"/><rect x="4" y="22" width="2.3" height="2.3" fill="#eef0f2"/><rect x="6" y="22" width="2.3" height="2.3" fill="#e3844f"/><rect x="8" y="22" width="2.3" height="2.3" fill="#e3844f"/><rect x="10" y="22" width="2.3" height="2.3" fill="#e3844f"/><rect x="12" y="22" width="2.3" height="2.3" fill="#e3844f"/><rect x="14" y="22" width="2.3" height="2.3" fill="#e3844f"/><rect x="16" y="22" width="2.3" height="2.3" fill="#e3844f"/><rect x="18" y="22" width="2.3" height="2.3" fill="#eef0f2"/><rect x="20" y="22" width="2.3" height="2.3" fill="#eef0f2"/><rect x="22" y="22" width="2.3" height="2.3" fill="#eef0f2"/></g><circle cx="12" cy="12" r="11.5" fill="none" stroke="#e6e6e6" stroke-opacity="0.7" stroke-width="1"/></svg>
<div class="abs" style="left:147px;top:880.0px;font-size:16px;color:#5e5e5e;line-height:20px">James Nguyen</div>
<div class="abs" style="right:1145px;top:880.0px;font-size:16px;color:#7c7c7c;line-height:20px;white-space:nowrap">created <span style="color:#626262">a minute ago</span></div>
<svg class="abs" style="left:117px;top:911px" width="24" height="24" viewBox="0 0 24 24"><defs><clipPath id="av2"><circle cx="12" cy="12" r="12"/></clipPath></defs><g clip-path="url(#av2)"><rect x="0" y="0" width="2.3" height="2.3" fill="#eef0f2"/><rect x="2" y="0" width="2.3" height="2.3" fill="#eef0f2"/><rect x="4" y="0" width="2.3" height="2.3" fill="#eef0f2"/><rect x="6" y="0" width="2.3" height="2.3" fill="#eef0f2"/><rect x="8" y="0" width="2.3" height="2.3" fill="#eef0f2"/><rect x="10" y="0" width="2.3" height="2.3" fill="#eef0f2"/><rect x="12" y="0" width="2.3" height="2.3" fill="#eef0f2"/><rect x="14" y="0" width="2.3" height="2.3" fill="#eef0f2"/><rect x="16" y="0" width="2.3" height="2.3" fill="#eef0f2"/><rect x="18" y="0" width="2.3" height="2.3" fill="#eef0f2"/><rect x="20" y="0" width="2.3" height="2.3" fill="#eef0f2"/><rect x="22" y="0" width="2.3" height="2.3" fill="#eef0f2"/><rect x="0" y="2" width="2.3" height="2.3" fill="#eef0f2"/><rect x="2" y="2" width="2.3" height="2.3" fill="#eef0f2"/><rect x="4" y="2" width="2.3" height="2.3" fill="#eef0f2"/><rect x="6" y="2" width="2.3" height="2.3" fill="#eef0f2"/><rect x="8" y="2" width="2.3" height="2.3" fill="#c8ccd0"/><rect x="10" y="2" width="2.3" height="2.3" fill="#c8ccd0"/><rect x="12" y="2" width="2.3" height="2.3" fill="#c8ccd0"/><rect x="14" y="2" width="2.3" height="2.3" fill="#c8ccd0"/><rect x="16" y="2" width="2.3" height="2.3" fill="#eef0f2"/><rect x="18" y="2" width="2.3" height="2.3" fill="#eef0f2"/><rect x="20" y="2" width="2.3" height="2.3" fill="#eef0f2"/><rect x="22" y="2" width="2.3" height="2.3" fill="#eef0f2"/><rect x="0" y="4" width="2.3" height="2.3" fill="#eef0f2"/><rect x="2" y="4" width="2.3" height="2.3" fill="#eef0f2"/><rect x="4" y="4" width="2.3" height="2.3" fill="#e3844f"/><rect x="6" y="4" width="2.3" height="2.3" fill="#c8ccd0"/><rect x="8" y="4" width="2.3" height="2.3" fill="#161616"/><rect x="10" y="4" width="2.3" height="2.3" fill="#161616"/><rect x="12" y="4" width="2.3" height="2.3" fill="#161616"/><rect x="14" y="4" width="2.3" height="2.3" fill="#161616"/><rect x="16" y="4" width="2.3" height="2.3" fill="#c8ccd0"/><rect x="18" y="4" width="2.3" height="2.3" fill="#e3844f"/><rect x="20" y="4" width="2.3" height="2.3" fill="#eef0f2"/><rect x="22" y="4" width="2.3" height="2.3" fill="#eef0f2"/><rect x="0" y="6" width="2.3" height="2.3" fill="#eef0f2"/><rect x="2" y="6" width="2.3" height="2.3" fill="#e3844f"/><rect x="4" y="6" width="2.3" height="2.3" fill="#e3844f"/><rect x="6" y="6" width="2.3" height="2.3" fill="#4b4f52"/><rect x="8" y="6" width="2.3" height="2.3" fill="#161616"/><rect x="10" y="6" width="2.3" height="2.3" fill="#e3844f"/><rect x="12" y="6" width="2.3" height="2.3" fill="#e3844f"/><rect x="14" y="6" width="2.3" height="2.3" fill="#e3844f"/><rect x="16" y="6" width="2.3" height="2.3" fill="#161616"/><rect x="18" y="6" width="2.3" height="2.3" fill="#4b4f52"/><rect x="20" y="6" width="2.3" height="2.3" fill="#e3844f"/><rect x="22" y="6" width="2.3" height="2.3" fill="#eef0f2"/><rect x="0" y="8" width="2.3" height="2.3" fill="#e3844f"/><rect x="2" y="8" width="2.3" height="2.3" fill="#4b4f52"/><rect x="4" y="8" width="2.3" height="2.3" fill="#e3844f"/><rect x="6" y="8" width="2.3" height="2.3" fill="#e3844f"/><rect x="8" y="8" width="2.3" height="2.3" fill="#161616"/><rect x="10" y="8" width="2.3" height="2.3" fill="#4b4f52"/><rect x="12" y="8" width="2.3" height="2.3" fill="#4b4f52"/><rect x="14" y="8" width="2.3" height="2.3" fill="#161616"/><rect x="16" y="8" width="2.3" height="2.3" fill="#e3844f"/><rect x="18" y="8" width="2.3" height="2.3" fill="#e3844f"/><rect x="20" y="8" width="2.3" height="2.3" fill="#4b4f52"/><rect x="22" y="8" width="2.3" height="2.3" fill="#e3844f"/><rect x="0" y="10" width="2.3" height="2.3" fill="#4b4f52"/><rect x="2" y="10" width="2.3" height="2.3" fill="#4b4f52"/><rect x="4" y="10" width="2.3" height="2.3" fill="#8b8f92"/><rect x="6" y="10" width="2.3" height="2.3" fill="#e3844f"/><rect x="8" y="10" width="2.3" height="2.3" fill="#e3844f"/><rect x="10" y="10" width="2.3" height="2.3" fill="#e3844f"/><rect x="12" y="10" width="2.3" height="2.3" fill="#e3844f"/><rect x="14" y="10" width="2.3" height="2.3" fill="#e3844f"/><rect x="16" y="10" width="2.3" height="2.3" fill="#e3844f"/><rect x="18" y="10" width="2.3" height="2.3" fill="#4b4f52"/><rect x="20" y="10" width="2.3" height="2.3" fill="#4b4f52"/><rect x="22" y="10" width="2.3" height="2.3" fill="#e3844f"/><rect x="0" y="12" width="2.3" height="2.3" fill="#4b4f52"/><rect x="2" y="12" width="2.3" height="2.3" fill="#4b4f52"/><rect x="4" y="12" width="2.3" height="2.3" fill="#8b8f92"/><rect x="6" y="12" width="2.3" height="2.3" fill="#e3844f"/><rect x="8" y="12" width="2.3" height="2.3" fill="#4b4f52"/><rect x="10" y="12" width="2.3" height="2.3" fill="#4b4f52"/><rect x="12" y="12" width="2.3" height="2.3" fill="#4b4f52"/><rect x="14" y="12" width="2.3" height="2.3" fill="#4b4f52"/><rect x="16" y="12" width="2.3" height="2.3" fill="#e3844f"/><rect x="18" y="12" width="2.3" height="2.3" fill="#4b4f52"/><rect x="20" y="12" width="2.3" height="2.3" fill="#8b8f92"/><rect x="22" y="12" width="2.3" height="2.3" fill="#4b4f52"/><rect x="0" y="14" width="2.3" height="2.3" fill="#8b8f92"/><rect x="2" y="14" width="2.3" height="2.3" fill="#4b4f52"/><rect x="4" y="14" width="2.3" height="2.3" fill="#e3844f"/><rect x="6" y="14" width="2.3" height="2.3" fill="#e3844f"/><rect x="8" y="14" width="2.3" height="2.3" fill="#e3844f"/><rect x="10" y="14" width="2.3" height="2.3" fill="#4b4f52"/><rect x="12" y="14" width="2.3" height="2.3" fill="#e3844f"/><rect x="14" y="14" width="2.3" height="2.3" fill="#e3844f"/><rect x="16" y="14" width="2.3" height="2.3" fill="#e3844f"/><rect x="18" y="14" width="2.3" height="2.3" fill="#4b4f52"/><rect x="20" y="14" width="2.3" height="2.3" fill="#e3844f"/><rect x="22" y="14" width="2.3" height="2.3" fill="#8b8f92"/><rect x="0" y="16" width="2.3" height="2.3" fill="#eef0f2"/><rect x="2" y="16" width="2.3" height="2.3" fill="#8b8f92"/><rect x="4" y="16" width="2.3" height="2.3" fill="#4b4f52"/><rect x="6" y="16" width="2.3" height="2.3" fill="#e3844f"/><rect x="8" y="16" width="2.3" height="2.3" fill="#e3844f"/><rect x="10" y="16" width="2.3" height="2.3" fill="#4b4f52"/><rect x="12" y="16" width="2.3" height="2.3" fill="#4b4f52"/><rect x="14" y="16" width="2.3" height="2.3" fill="#e3844f"/><rect x="16" y="16" width="2.3" height="2.3" fill="#e3844f"/><rect x="18" y="16" width="2.3" height="2.3" fill="#4b4f52"/><rect x="20" y="16" width="2.3" height="2.3" fill="#8b8f92"/><rect x="22" y="16" width="2.3" height="2.3" fill="#eef0f2"/><rect x="0" y="18" width="2.3" height="2.3" fill="#eef0f2"/><rect x="2" y="18" width="2.3" height="2.3" fill="#8b8f92"/><rect x="4" y="18" width="2.3" height="2.3" fill="#8b8f92"/><rect x="6" y="18" width="2.3" height="2.3" fill="#4b4f52"/><rect x="8" y="18" width="2.3" height="2.3" fill="#e3844f"/><rect x="10" y="18" width="2.3" height="2.3" fill="#4b4f52"/><rect x="12" y="18" width="2.3" height="2.3" fill="#4b4f52"/><rect x="14" y="18" width="2.3" height="2.3" fill="#e3844f"/><rect x="16" y="18" width="2.3" height="2.3" fill="#4b4f52"/><rect x="18" y="18" width="2.3" height="2.3" fill="#8b8f92"/><rect x="20" y="18" width="2.3" height="2.3" fill="#8b8f92"/><rect x="22" y="18" width="2.3" height="2.3" fill="#eef0f2"/><rect x="0" y="20" width="2.3" height="2.3" fill="#eef0f2"/><rect x="2" y="20" width="2.3" height="2.3" fill="#eef0f2"/><rect x="4" y="20" width="2.3" height="2.3" fill="#e3844f"/><rect x="6" y="20" width="2.3" height="2.3" fill="#e3844f"/><rect x="8" y="20" width="2.3" height="2.3" fill="#e3844f"/><rect x="10" y="20" width="2.3" height="2.3" fill="#4b4f52"/><rect x="12" y="20" width="2.3" height="2.3" fill="#e3844f"/><rect x="14" y="20" width="2.3" height="2.3" fill="#e3844f"/><rect x="16" y="20" width="2.3" height="2.3" fill="#e3844f"/><rect x="18" y="20" width="2.3" height="2.3" fill="#c8ccd0"/><rect x="20" y="20" width="2.3" height="2.3" fill="#eef0f2"/><rect x="22" y="20" width="2.3" height="2.3" fill="#eef0f2"/><rect x="0" y="22" width="2.3" height="2.3" fill="#eef0f2"/><rect x="2" y="22" width="2.3" height="2.3" fill="#eef0f2"/><rect x="4" y="22" width="2.3" height="2.3" fill="#eef0f2"/><rect x="6" y="22" width="2.3" height="2.3" fill="#e3844f"/><rect x="8" y="22" width="2.3" height="2.3" fill="#e3844f"/><rect x="10" y="22" width="2.3" height="2.3" fill="#e3844f"/><rect x="12" y="22" width="2.3" height="2.3" fill="#e3844f"/><rect x="14" y="22" width="2.3" height="2.3" fill="#e3844f"/><rect x="16" y="22" width="2.3" height="2.3" fill="#e3844f"/><rect x="18" y="22" width="2.3" height="2.3" fill="#eef0f2"/><rect x="20" y="22" width="2.3" height="2.3" fill="#eef0f2"/><rect x="22" y="22" width="2.3" height="2.3" fill="#eef0f2"/></g><circle cx="12" cy="12" r="11.5" fill="none" stroke="#e6e6e6" stroke-opacity="0.7" stroke-width="1"/></svg>
<div class="abs" style="left:147px;top:914.0px;font-size:16px;color:#5e5e5e;line-height:20px">James Nguyen</div>
<div class="abs" style="right:1145px;top:914.0px;font-size:16px;color:#7c7c7c;line-height:20px;white-space:nowrap">updated <span style="color:#626262">a minute ago</span></div>
<svg class="abs" style="left:115px;top:963px" width="13" height="15" viewBox="0 0 13 15" fill="none" stroke="#777" stroke-width="1.3">
  <path d="M2 8.5 A4.5 4.5 0 0 1 9.3 3.3"/>
  <path d="M11 6.5 A4.5 4.5 0 0 1 3.7 11.7"/>
  <path d="M8 1.2 L9.8 3.3 L7.4 4.6"/>
  <path d="M5 13.8 L3.2 11.7 L5.6 10.4"/>
</svg>
<div class="abs" style="left:133px;top:962.0px;font-size:16px;color:#6a6a6a;line-height:20px">Refresh Schedule</div>
<div class="abs" style="right:1145px;top:962.0px;font-size:16px;color:#2196f3;line-height:20px;white-space:nowrap">Every minute</div>
<!-- vertical resize handle -->
<div class="abs" style="left:465px;top:522px;width:1px;height:31px;background:#d5d5d5"></div>
<div class="abs" style="left:468px;top:522px;width:1px;height:31px;background:#d5d5d5"></div>


<!-- EDITOR -->
<div id="editor"></div>
<div class="abs" style="left:493px;top:341px;width:58px;height:19px;background:#e4e5e7"></div>
<div class="abs" style="left:551px;top:341px;width:1029px;height:19px;background:#eceef0"></div>
<div class="abs" style="left:491px;top:97.05px;width:45px">
<div class="ln" style="position:static">1</div><div class="ln" style="position:static">2</div><div class="ln" style="position:static">3</div><div class="ln" style="position:static">4</div><div class="ln" style="position:static">5</div><div class="ln" style="position:static">6</div><div class="ln" style="position:static">7</div><div class="ln" style="position:static">8</div><div class="ln" style="position:static">9</div><div class="ln" style="position:static">10</div><div class="ln" style="position:static">11</div><div class="ln" style="position:static">12</div><div class="ln" style="position:static">13</div><div class="ln" style="position:static">14</div>
</div>
<div class="code" style="left:557px;top:97.05px"><span class="k">select</span> age_group, outcome, <span style="color:#555">count</span>(*) <span class="k">from</span> (
<span class="k">select</span>
  round(year(current_date())-birth_year, <span class="k">-1</span>) <span class="k">as</span> age_group,
  <span class="k">case</span>
    <span class="k">when</span> (released_date is <span class="k">not</span> <span class="k">null</span>) then "Recovered"
    <span class="k">when</span> (deceased_date is <span class="k">not</span> <span class="k">null</span>) then "Death"
    <span class="k">else</span> "In Progress"
  <span class="k">end</span> <span class="k">as</span> outcome
<span class="k">from</span>
  covid.patient_delta
<span class="k">where</span> birth_year is <span class="k">not</span> <span class="k">null</span>
) x
<span class="k">group</span> <span class="k">by</span> age_group, outcome
<span class="k">order</span> <span class="k">by</span> age_group, outcome</div>
<div class="abs" style="left:795px;top:342px;width:1px;height:18px;background:#333"></div>

<!-- editor buttons -->
<div class="btn" style="left:491px;top:381px;width:68px;height:43px"></div>
<div class="abs" style="left:511px;top:393.5px;font-size:16px;color:#333;line-height:20px;white-space:nowrap;letter-spacing:0.5px">{{ }}</div>
<div class="btn" style="left:565px;top:381px;width:50px;height:43px"></div>
<svg class="abs" style="left:584px;top:396px" width="13" height="13" viewBox="0 0 13 13" fill="none" stroke="#333" stroke-width="1.3">
  <path d="M0 0.8 H12 M5 3.8 H12 M5 6.5 H12 M5 9.2 H12 M0 12 H12"/>
  <path d="M0.5 4.2 L3.2 6.5 L0.5 8.8 Z" fill="#333" stroke="none"/>
</svg>
<div class="btn" style="left:622px;top:381px;width:54px;height:43px"></div>
<svg class="abs" style="left:643px;top:394px" width="12" height="16" viewBox="0 0 12 16" fill="none" stroke="#333" stroke-width="1.3" stroke-linejoin="round">
  <path d="M7.5 1 L2 9 H6 L4.5 15 L10 6.5 H6 Z"/>
</svg>
<div class="btn" style="left:1371px;top:381px;width:93px;height:43px"></div>
<svg class="abs" style="left:1390px;top:395px" width="14" height="15" viewBox="0 0 14 15" fill="none" stroke="#333" stroke-width="1.2">
  <path d="M1 1 H11 L13 3 V14 H1 Z"/>
  <path d="M4 1 V5 H10 V1"/>
  <path d="M3.5 14 V8.5 H10.5 V14"/>
</svg>
<div class="abs" style="left:1410px;top:394.0px;font-size:16px;color:#4a4a4a;line-height:20px">Save</div>
<div class="abs" style="left:1471px;top:381px;width:110px;height:43px;background:#2196f3;border-radius:3px"></div>
<svg class="abs" style="left:1490px;top:397px" width="8" height="11" viewBox="0 0 8 11"><path d="M0.5 0.5 L7.5 5.5 L0.5 10.5 Z" fill="#fff"/></svg>
<div class="abs" style="left:1504px;top:394.0px;font-size:16px;color:#fff;line-height:20px">Execute</div>

<!-- splitter -->
<div class="abs" style="left:1021px;top:434px;width:31px;height:1px;background:#cfcfcf"></div>
<div class="abs" style="left:1021px;top:437px;width:31px;height:1px;background:#cfcfcf"></div>
<div class="abs" style="left:472px;top:441px;width:1128px;height:1px;background:#ececec"></div>
<!-- tabs -->
<div class="abs" style="left:491px;top:461px;width:81px;height:49px;background:#fff;border-left:1px solid #e8e8e8;border-top:2px solid #2196f3"></div>
<div class="abs" style="left:513px;top:477.3px;font-size:16px;color:#2196f3;line-height:20px">Table</div>
<div class="abs" style="left:571px;top:462px;width:237px;height:48px;background:#f6f7f9;border:1px solid #e3e3e3;border-bottom:1px solid #e3e3e3"></div>
<div class="abs" style="left:592px;top:477.3px;font-size:16px;color:#4a4a4a;line-height:20px;white-space:nowrap">Outcome by Age Group</div>
<svg class="abs" style="left:773px;top:482px" width="9" height="9" viewBox="0 0 9 9" stroke="#888" stroke-width="1.1"><path d="M1 1 L8 8 M8 1 L1 8"/></svg>
<svg class="abs" style="left:827px;top:478px" width="13" height="13" viewBox="0 0 13 13" stroke="#2196f3" stroke-width="3"><path d="M6.5 0 V13 M0 6.5 H13"/></svg>
<div class="abs" style="left:846px;top:476.4px;font-size:16px;color:#6a6a6a;line-height:20px;white-space:nowrap">Add Visualization</div>
<div class="abs" style="left:807px;top:509px;width:774px;height:1px;background:#e3e3e3"></div>
<!-- table container -->
<div class="abs" style="left:491px;top:509px;width:1090px;height:409px;border:1px solid #e3e3e3;border-top:none"></div>
<div class="abs" style="left:511px;top:528px;width:1050px;height:61px;background:#fafafa;border-top:1px solid #e8e8e8;border-bottom:1px solid #e8e8e8"></div>
<div class="th" style="left:524px;top:551px">age_group</div>
<div class="th" style="left:642.6px;top:551px">outcome</div>
<div class="th" style="right:68px;top:551px">count(1)</div>

<div class="td" style="right:982.5px;top:599.46px">0</div>
<div class="td" style="left:642.6px;top:599.46px">In Progress</div>
<div class="td" style="right:51px;top:599.46px">1</div>
<div class="rowline" style="top:628px"></div>
<div class="td" style="right:982.5px;top:639.46px">10</div>
<div class="td" style="left:642.6px;top:639.46px">In Progress</div>
<div class="td" style="right:51px;top:639.46px">6</div>
<div class="rowline" style="top:668px"></div>
<div class="td" style="right:982.5px;top:679.46px">10</div>
<div class="td" style="left:642.6px;top:679.46px">Recovered</div>
<div class="td" style="right:51px;top:679.46px">1</div>
<div class="rowline" style="top:708px"></div>
<div class="td" style="right:982.5px;top:719.46px">20</div>
<div class="td" style="left:642.6px;top:719.46px">In Progress</div>
<div class="td" style="right:51px;top:719.46px">67</div>
<div class="rowline" style="top:748px"></div>
<div class="td" style="right:982.5px;top:759.46px">20</div>
<div class="td" style="left:642.6px;top:759.46px">Recovered</div>
<div class="td" style="right:51px;top:759.46px">5</div>
<div class="rowline" style="top:788px"></div>
<div class="td" style="right:982.5px;top:799.46px">30</div>
<div class="td" style="left:642.6px;top:799.46px">In Progress</div>
<div class="td" style="right:51px;top:799.46px">109</div>
<div class="rowline" style="top:828px"></div>
<div class="td" style="right:982.5px;top:839.46px">30</div>
<div class="td" style="left:642.6px;top:839.46px">Recovered</div>
<div class="td" style="right:51px;top:839.46px">11</div>
<div class="rowline" style="top:868px"></div>
<div class="td" style="right:982.5px;top:879.46px">40</div>
<div class="td" style="left:642.6px;top:879.46px">Death</div>
<div class="td" style="right:51px;top:879.46px">2</div>
<!-- bottom bar -->
<div class="abs" style="left:473px;top:926px;width:1127px;height:11px;background:linear-gradient(to bottom,#fff,#f6f7f9)"></div>
<div class="btn" style="left:491px;top:949px;width:40px;height:39px"></div>
<svg class="abs" style="left:508px;top:961px" width="4" height="14" viewBox="0 0 4 14" fill="#333"><circle cx="2" cy="2" r="1"/><circle cx="2" cy="7" r="1"/><circle cx="2" cy="12" r="1"/></svg>
<div class="btn" style="left:537px;top:949px;width:190px;height:39px"></div>
<svg class="abs" style="left:556px;top:960px" width="17" height="17" viewBox="0 0 17 17" fill="none" stroke="#4a4a4a" stroke-width="1.3">
  <path d="M8 2 H1.5 V15.5 H15 V9"/>
  <path d="M13.5 1.2 L15.8 3.5 L8.5 10.8 L5.8 11.2 L6.2 8.5 Z"/>
</svg>
<div class="abs" style="left:582px;top:959.5px;font-size:16px;color:#4a4a4a;line-height:20px;white-space:nowrap">Edit Visualization</div>
<div class="abs" style="left:739px;top:958.5px;font-size:16px;color:#707070;line-height:20px;white-space:nowrap"><span style="color:#4f4f4f">23</span> rows <span style="color:#4f4f4f;margin-left:3px">2 seconds</span> runtime</div>
<div class="abs" style="right:31px;top:958.3px;font-size:16px;color:#707070;line-height:20px;white-space:nowrap">Refreshed <span style="color:#505050">just now</span></div>


</body></html>
